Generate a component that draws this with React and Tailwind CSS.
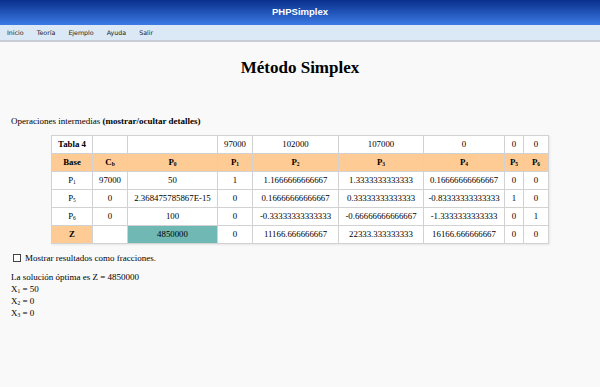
function P({ n }) {
  return (
    <span>
      P<sub className="text-[5.5px] align-baseline relative top-[1px]">{n}</sub>
    </span>
  );
}

const cell = "border border-[#d2d2d2] text-center h-[18px] p-0 leading-none";
const head = "border border-[#d2d2d2] text-center h-[18px] p-0 leading-none bg-[#ffcb95] font-bold";

export default function App() {
  const nav = ["Inicio", "Teoría", "Ejemplo", "Ayuda", "Salir"];
  return (
    <div className="w-[600px] h-[387px] bg-[#f9f9f9] overflow-hidden text-black font-['Liberation_Serif',serif]">
      <div className="h-[25px] bg-gradient-to-b from-[#0a2f8c] to-[#3c7ae6] flex items-center justify-center">
        <span className="text-white font-bold text-[9.5px] font-['Liberation_Sans',Arial,sans-serif]">PHPSimplex</span>
      </div>
      <div className="h-[17px] bg-[#dbe8f6] border-b-2 border-[#c8cdd4] flex items-center pl-[7px] gap-[13px] text-[6.3px] text-[#222] font-['DejaVu_Sans',Tahoma,sans-serif]">
        {nav.map((n) => (
          <span key={n}>{n}</span>
        ))}
      </div>

      <h1 className="text-center font-bold text-[17px] mt-[15px] leading-[22px]">Método Simplex</h1>

      <p className="text-[9px] mt-[36px] ml-[11px] leading-[12px]">
        Operaciones intermedias <b>(mostrar/ocultar detalles)</b>
      </p>

      <div className="flex justify-center mt-[8px]">
        <table className="table-fixed border-collapse bg-white text-[8.8px] w-[497px] shadow-[1px_1px_2px_rgba(0,0,0,0.08)]">
          <colgroup>
            <col className="w-[41px]" />
            <col className="w-[35px]" />
            <col className="w-[90px]" />
            <col className="w-[35px]" />
            <col className="w-[86px]" />
            <col className="w-[85px]" />
            <col className="w-[81px]" />
            <col className="w-[19px]" />
            <col className="w-[25px]" />
          </colgroup>
          <tbody>
            <tr>
              <td className={cell + " font-bold"}>Tabla 4</td>
              <td className={cell}></td>
              <td className={cell}></td>
              <td className={cell}>97000</td>
              <td className={cell}>102000</td>
              <td className={cell}>107000</td>
              <td className={cell}>0</td>
              <td className={cell}>0</td>
              <td className={cell}>0</td>
            </tr>
            <tr>
              <td className={head}>Base</td>
              <td className={head}>
                C<sub className="text-[5.5px] align-baseline relative top-[1px]">b</sub>
              </td>
              <td className={head}><P n="0" /></td>
              <td className={head}><P n="1" /></td>
              <td className={head}><P n="2" /></td>
              <td className={head}><P n="3" /></td>
              <td className={head}><P n="4" /></td>
              <td className={head}><P n="5" /></td>
              <td className={head}><P n="6" /></td>
            </tr>
            <tr>
              <td className={cell}><P n="1" /></td>
              <td className={cell}>97000</td>
              <td className={cell}>50</td>
              <td className={cell}>1</td>
              <td className={cell}>1.1666666666667</td>
              <td className={cell}>1.3333333333333</td>
              <td className={cell}>0.16666666666667</td>
              <td className={cell}>0</td>
              <td className={cell}>0</td>
            </tr>
            <tr>
              <td className={cell}><P n="5" /></td>
              <td className={cell}>0</td>
              <td className={cell}>2.368475785867E-15</td>
              <td className={cell}>0</td>
              <td className={cell}>0.16666666666667</td>
              <td className={cell}>0.33333333333333</td>
              <td className={cell}>-0.83333333333333</td>
              <td className={cell}>1</td>
              <td className={cell}>0</td>
            </tr>
            <tr>
              <td className={cell}><P n="6" /></td>
              <td className={cell}>0</td>
              <td className={cell}>100</td>
              <td className={cell}>0</td>
              <td className={cell}>-0.33333333333333</td>
              <td className={cell}>-0.66666666666667</td>
              <td className={cell}>-1.3333333333333</td>
              <td className={cell}>0</td>
              <td className={cell}>1</td>
            </tr>
            <tr>
              <td className={head}>Z</td>
              <td className={cell}></td>
              <td className={cell + " bg-[#6fb8b3]"}>4850000</td>
              <td className={cell}>0</td>
              <td className={cell}>11166.666666667</td>
              <td className={cell}>22333.333333333</td>
              <td className={cell}>16166.666666667</td>
              <td className={cell}>0</td>
              <td className={cell}>0</td>
            </tr>
          </tbody>
        </table>
      </div>

      <div className="flex items-center ml-[13px] mt-[8px] text-[9px] leading-[12px]">
        <span className="w-[8px] h-[8px] border border-[#444] bg-white inline-block mr-[4px]"></span>
        <span>Mostrar resultados como fracciones.</span>
      </div>

      <div className="ml-[11px] mt-[7px] text-[9px] leading-[12px]">
        <div>La solución óptima es Z = 4850000</div>
        <div>X<sub className="text-[5.5px] align-baseline relative top-[1px]">1</sub> = 50</div>
        <div>X<sub className="text-[5.5px] align-baseline relative top-[1px]">2</sub> = 0</div>
        <div>X<sub className="text-[5.5px] align-baseline relative top-[1px]">3</sub> = 0</div>
      </div>
    </div>
  );
}
